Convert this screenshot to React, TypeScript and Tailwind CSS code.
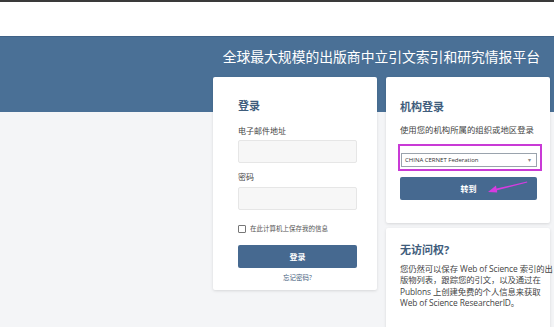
import React from 'react';

const font = "font-['Open_Sans','Noto_Sans_CJK_SC',sans-serif]";

function LoginCard() {
  return (
    <div className="w-[164px] shrink-0 bg-white rounded-[2px] shadow-[0_1px_3px_rgba(0,0,0,0.12)] pl-[25px] pr-[20px] pt-[22px] pb-[8px]">
      <h2 className="h-[14px] leading-[14px] text-[11px] font-bold text-[#3f5d7c]">登录</h2>
      <p className="mt-[13px] h-[10px] leading-[10px] text-[8px] text-[#444]">电子邮件地址</p>
      <div className="mt-[4px] h-[23px] w-[119px] bg-[#f7f7f7] border border-[#e6e6e6] rounded-[2px]" />
      <p className="mt-[9px] h-[10px] leading-[10px] text-[8px] text-[#444]">密码</p>
      <div className="mt-[5px] h-[23px] w-[119px] bg-[#f7f7f7] border border-[#e6e6e6] rounded-[2px]" />
      <label className="mt-[14px] h-[10px] flex items-center gap-[4px]">
        <span className="w-[8px] h-[8px] border border-[#777] rounded-[1px] bg-white" />
        <span className="text-[6.5px] leading-[10px] text-[#555]">在此计算机上保存我的信息</span>
      </label>
      <button className="mt-[11px] h-[23px] w-[119px] flex items-center justify-center bg-[#466990] rounded-[2px] text-white text-[8px] font-bold">
        登录
      </button>
      <p className="mt-[6px] h-[8px] w-[119px] leading-[8px] text-center text-[6.5px] text-[#3f5d7c]">忘记密码?</p>
    </div>
  );
}

function InstitutionCard() {
  return (
    <div className="bg-white rounded-[2px] shadow-[0_1px_3px_rgba(0,0,0,0.12)] px-[14px] pt-[23px] pb-[23px]">
      <h2 className="h-[14px] leading-[14px] text-[11px] font-bold text-[#3f5d7c]">机构登录</h2>
      <p className="mt-[11px] h-[10px] leading-[10px] text-[8.4px] text-[#444] whitespace-nowrap">使用您的机构所属的组织或地区登录</p>
      <div className="mt-[9px] -ml-[2px] w-[144px] h-[27px] border-2 border-[#c93ad6] pt-[7px] pl-[1px] pr-[3px] pb-[2px]">
        <div className="h-[14px] bg-white border border-[#9aa3ad] flex items-center justify-between pl-[3px] pr-[5px]">
          <span className="text-[6px] leading-[12px] text-[#333]">CHINA CERNET Federation</span>
          <span className="text-[6px] leading-[12px] text-[#888]">▾</span>
        </div>
      </div>
      <button className="relative mt-[6px] h-[23px] w-[137px] flex items-center justify-center bg-[#466990] rounded-[2px] text-white text-[8px] font-bold">
        转到
        <svg className="absolute left-[86px] top-[2px]" width="44" height="14" viewBox="0 0 44 14">
          <polygon points="2,13 10,6.5 10.5,9.6 41,2.5 41.3,3.6 11,11.2 11.2,13.6" fill="#d63be0" />
        </svg>
      </button>
    </div>
  );
}

function NoAccessCard() {
  return (
    <div className="bg-white rounded-[2px] shadow-[0_1px_3px_rgba(0,0,0,0.12)] pl-[14px] pr-[2px] pt-[15px] pb-[24px]">
      <h2 className="h-[14px] leading-[14px] text-[11px] font-bold text-[#3f5d7c]">无访问权?</h2>
      <p className="mt-[6px] text-[8.4px] leading-[11.3px] text-[#444] whitespace-nowrap tracking-[-0.1px]">
        您仍然可以保存 Web of Science 索引的出<br />
        版物列表，跟踪您的引文，以及通过在<br />
        Publons 上创建免费的个人信息来获取<br />
        Web of Science ResearcherID。
      </p>
    </div>
  );
}

export default function App() {
  return (
    <div className={`w-[554px] h-[327px] overflow-hidden bg-[#f4f5f7] ${font}`}>
      <div className="h-[2px] bg-[#3a3a3a]" />
      <div className="h-[34px] bg-white" />
      <div className="h-[76px] bg-[#4a7096] border-t border-[#3f6287] pt-[10px] pr-[14px] flex justify-end">
        <h1 className="h-[20px] leading-[20px] text-[13.8px] text-white">全球最大规模的出版商中立引文索引和研究情报平台</h1>
      </div>
      <div className="-mt-[35px] flex justify-end gap-[9px] pr-[4px]">
        <div className="self-start">
          <LoginCard />
        </div>
        <div className="w-[164px] flex flex-col gap-[5px]">
          <InstitutionCard />
          <NoAccessCard />
        </div>
      </div>
    </div>
  );
}
